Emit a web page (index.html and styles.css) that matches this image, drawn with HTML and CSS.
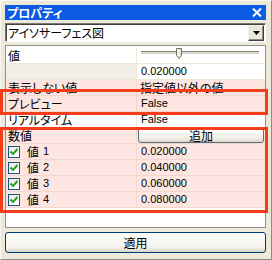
FILE: index.html
```html
<!DOCTYPE html>
<html lang="ja">
<head>
<meta charset="utf-8">
<link rel="stylesheet" href="styles.css">
</head>
<body>
<div class="window">
  <div class="titlebar">
    <span class="title">プロパティ</span>
    <svg class="close" width="10" height="9" viewBox="0 0 10 9"><path d="M1 0.5 L9 8.5 M9 0.5 L1 8.5" stroke="#fff" stroke-width="2" fill="none"/></svg>
  </div>
  <div class="combo">
    <span class="combo-text">アイソサーフェス図</span>
    <span class="combo-btn"><svg width="7" height="4" viewBox="0 0 7 4"><path d="M0 0 H7 L3.5 4 Z" fill="#000"/></svg></span>
  </div>
  <div class="grid">
    <div class="row">
      <div class="name">値</div>
      <div class="val">
        <svg class="slider" width="128" height="15" viewBox="0 0 128 15">
          <rect x="4" y="3" width="118" height="3" fill="#d8d5c8"/>
          <path d="M4 3.5 H122" stroke="#8a8a84" stroke-width="1"/>
          <path d="M4 6.5 H122" stroke="#ffffff" stroke-width="1"/>
          <path d="M39.5 0.5 H44.5 V7.5 L42 10.5 L39.5 7.5 Z" fill="#ece9d8" stroke="#6d6d68" stroke-width="1"/>
          <path d="M40.5 1.5 V7.5" stroke="#fff" stroke-width="1"/>
        </svg>
      </div>
    </div>
    <div class="row">
      <div class="name blank"></div>
      <div class="val lat">0.020000</div>
    </div>
    <div class="row hl">
      <div class="name">表示しない値</div>
      <div class="val">指定値以外の値</div>
    </div>
    <div class="row hl">
      <div class="name">プレビュー</div>
      <div class="val lat">False</div>
    </div>
    <div class="row">
      <div class="name">リアルタイム</div>
      <div class="val lat">False</div>
    </div>
    <div class="row hl">
      <div class="name">数値</div>
      <div class="val btncell"><span class="add">追加</span></div>
    </div>
    <div class="row hl">
      <div class="name chk"><span class="cb"><svg width="8" height="7" viewBox="0 0 8 7"><path d="M0.5 3.5 L3 6 L7.5 1" stroke="#21a121" stroke-width="2" fill="none"/></svg></span>値<span class="lat n">1</span></div>
      <div class="val lat">0.020000</div>
    </div>
    <div class="row hl">
      <div class="name chk"><span class="cb"><svg width="8" height="7" viewBox="0 0 8 7"><path d="M0.5 3.5 L3 6 L7.5 1" stroke="#21a121" stroke-width="2" fill="none"/></svg></span>値<span class="lat n">2</span></div>
      <div class="val lat">0.040000</div>
    </div>
    <div class="row hl">
      <div class="name chk"><span class="cb"><svg width="8" height="7" viewBox="0 0 8 7"><path d="M0.5 3.5 L3 6 L7.5 1" stroke="#21a121" stroke-width="2" fill="none"/></svg></span>値<span class="lat n">3</span></div>
      <div class="val lat">0.060000</div>
    </div>
    <div class="row hl">
      <div class="name chk"><span class="cb"><svg width="8" height="7" viewBox="0 0 8 7"><path d="M0.5 3.5 L3 6 L7.5 1" stroke="#21a121" stroke-width="2" fill="none"/></svg></span>値<span class="lat n">4</span></div>
      <div class="val lat">0.080000</div>
    </div>
  </div>
  <div class="apply">適用</div>
  <div class="mark mark1"></div>
  <div class="mark mark2"></div>
</div>
</body>
</html>
```
FILE: styles.css
```css
* {
  box-sizing: border-box;
  margin: 0;
  padding: 0;
}

html, body {
  width: 272px;
  height: 260px;
  overflow: hidden;
  background: #ece9d8;
}

body {
  font-family: "Noto Sans CJK JP", sans-serif;
  font-size: 12px;
  font-feature-settings: "palt";
  color: #000;
}

.window {
  position: relative;
  width: 272px;
  height: 260px;
  background: #ece9d8;
  border: 1px solid;
  border-color: #f7f6f0 #8d8c85 #8d8c85 #f7f6f0;
  padding: 4px 5px 6px 4px;
  display: flex;
  flex-direction: column;
}

.titlebar {
  height: 15px;
  background: #0b5be4;
  color: #fff;
  display: flex;
  align-items: center;
  justify-content: space-between;
  padding: 0 4px 0 2px;
}

.title {
  font-weight: bold;
  font-size: 12px;
  line-height: 15px;
}

.close {
  display: block;
}

.combo {
  margin-top: 3px;
  height: 19px;
  background: #fff;
  border: 1px solid;
  border-color: #7a7a74 #ffffff #ffffff #7a7a74;
  box-shadow: inset 1px 1px 0 #404040;
  display: flex;
  align-items: center;
  justify-content: space-between;
  padding: 0 1px 0 2px;
}

.combo-text {
  line-height: 15px;
}

.combo-btn {
  width: 16px;
  height: 16px;
  margin-top: 1px;
  background: #ece9d8;
  border: 1px solid;
  border-color: #f4f3ee #404040 #404040 #f4f3ee;
  box-shadow: inset -1px -1px 0 #8d8c85;
  display: flex;
  align-items: center;
  justify-content: center;
}

.combo-btn svg {
  display: block;
}

.grid {
  margin-top: 3px;
  flex: 1;
  background: #fff;
  border: 1px solid #8f8f8a;
  padding-top: 2px;
  display: flex;
  flex-direction: column;
}

.row {
  display: grid;
  grid-template-columns: 131px 1fr;
  height: 16px;
}

.name,
.val {
  height: 16px;
  line-height: 15px;
  border-bottom: 1px solid #ece9d8;
  white-space: nowrap;
  overflow: hidden;
}

.name {
  border-right: 1px solid #ece9d8;
  padding-left: 2px;
}

.name.blank {
  background: #f1efe6;
}

.val {
  padding-left: 3px;
}

.lat {
  font-family: "Liberation Sans", sans-serif;
  font-size: 11px;
}

.val.lat {
  padding-left: 4px;
}

.slider {
  display: block;
  margin-left: -3px;
}

.row.hl .name,
.row.hl .val {
  background: #fde6e1;
  border-color: #f3d6cc;
}

.chk {
  display: flex;
  align-items: center;
  padding-left: 2px;
}

.cb {
  width: 12px;
  height: 12px;
  border: 1px solid #1c5180;
  background: linear-gradient(135deg, #e6e6e0, #ffffff);
  display: flex;
  align-items: center;
  justify-content: center;
  margin-right: 7px;
}

.cb svg {
  display: block;
}

.n {
  margin-left: 4px;
}

.val.btncell {
  padding: 0 1px 1px 1px;
  overflow: visible;
}

.add {
  display: block;
  height: 15px;
  font-size: 12px;
  line-height: 13px;
  text-align: center;
  border: 1px solid #5d6a7e;
  border-radius: 3px;
  background: linear-gradient(#ffffff, #f1efe6 70%, #dcd7cb);
}

.apply {
  margin-top: 4px;
  height: 21px;
  line-height: 19px;
  text-align: center;
  border: 1px solid #003c74;
  border-radius: 3px;
  background: linear-gradient(#ffffff, #f3f2ec 75%, #d8d3c6);
}

.mark {
  position: absolute;
  left: -1px;
  width: 268px;
  border: 3px solid #f23c1a;
}

.mark1 {
  top: 88px;
  height: 26px;
}

.mark2 {
  top: 126px;
  height: 86px;
}
```
